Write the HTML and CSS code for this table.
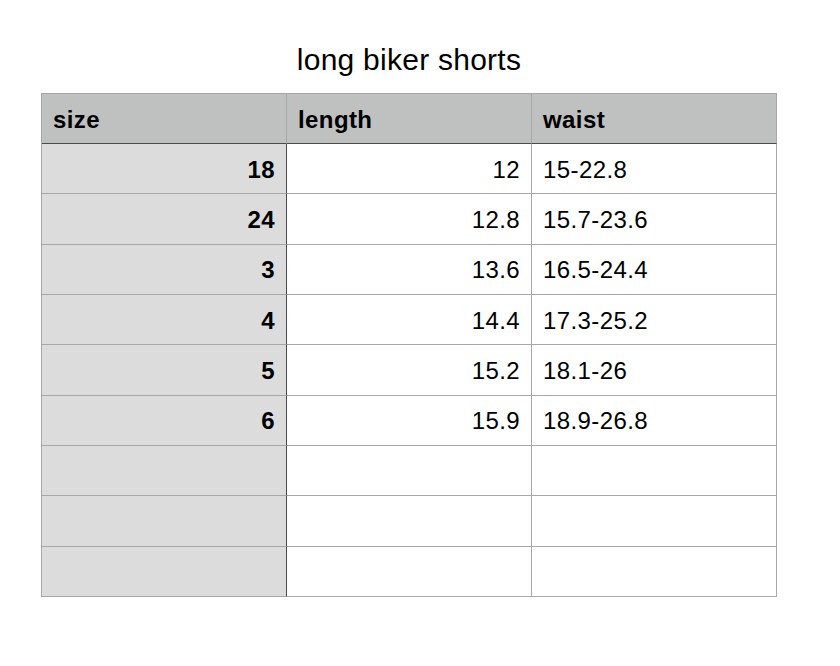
FILE: index.html
```html
<!DOCTYPE html>
<html>
<head>
<meta charset="utf-8">
<link rel="stylesheet" href="styles.css">
</head>
<body>
<div class="page">
  <h1 class="title">long biker shorts</h1>
  <div class="sheet">
    <div class="cell head">size</div>
    <div class="cell head">length</div>
    <div class="cell head">waist</div>

    <div class="cell key">18</div><div class="cell num">12</div><div class="cell txt">15-22.8</div>
    <div class="cell key">24</div><div class="cell num">12.8</div><div class="cell txt">15.7-23.6</div>
    <div class="cell key">3</div><div class="cell num">13.6</div><div class="cell txt">16.5-24.4</div>
    <div class="cell key">4</div><div class="cell num">14.4</div><div class="cell txt">17.3-25.2</div>
    <div class="cell key">5</div><div class="cell num">15.2</div><div class="cell txt">18.1-26</div>
    <div class="cell key">6</div><div class="cell num">15.9</div><div class="cell txt">18.9-26.8</div>
    <div class="cell key"></div><div class="cell num"></div><div class="cell txt"></div>
    <div class="cell key"></div><div class="cell num"></div><div class="cell txt"></div>
    <div class="cell key"></div><div class="cell num"></div><div class="cell txt"></div>
  </div>
</div>
</body>
</html>
```
FILE: styles.css
```css
html, body {
  margin: 0;
  padding: 0;
  background: #ffffff;
}
body {
  font-family: "Liberation Sans", Arial, sans-serif;
  color: #000;
}
.page {
  width: 736px;
  padding: 0 0 0 41px;
}
.title {
  margin: 0;
  height: 93px;
  box-sizing: border-box;
  padding-top: 43px;
  font-size: 30px;
  letter-spacing: 0.25px;
  font-weight: normal;
  line-height: 34px;
  text-align: center;
}
.sheet {
  display: grid;
  grid-template-columns: 245px 245px 245px;
  grid-template-rows: 50px repeat(9, 50.333px);
  border-top: 1px solid #a7a7a7;
  border-left: 1px solid #a7a7a7;
  width: 736px;
  box-sizing: border-box;
}
.cell {
  box-sizing: border-box;
  border-right: 1px solid #a7a7a7;
  border-bottom: 1px solid #a7a7a7;
  display: flex;
  align-items: center;
  padding: 2px 11px 0;
  font-size: 24px;
  letter-spacing: 0.4px;
  line-height: 1;
}
.head {
  background: #bfc1c0;
  font-weight: bold;
  border-bottom-color: #4a4a4a;
}
.key {
  background: #dcdcdc;
  font-weight: bold;
  justify-content: flex-end;
  border-right-color: #4a4a4a;
}
.num {
  justify-content: flex-end;
}
.txt {
  justify-content: flex-start;
}
```
